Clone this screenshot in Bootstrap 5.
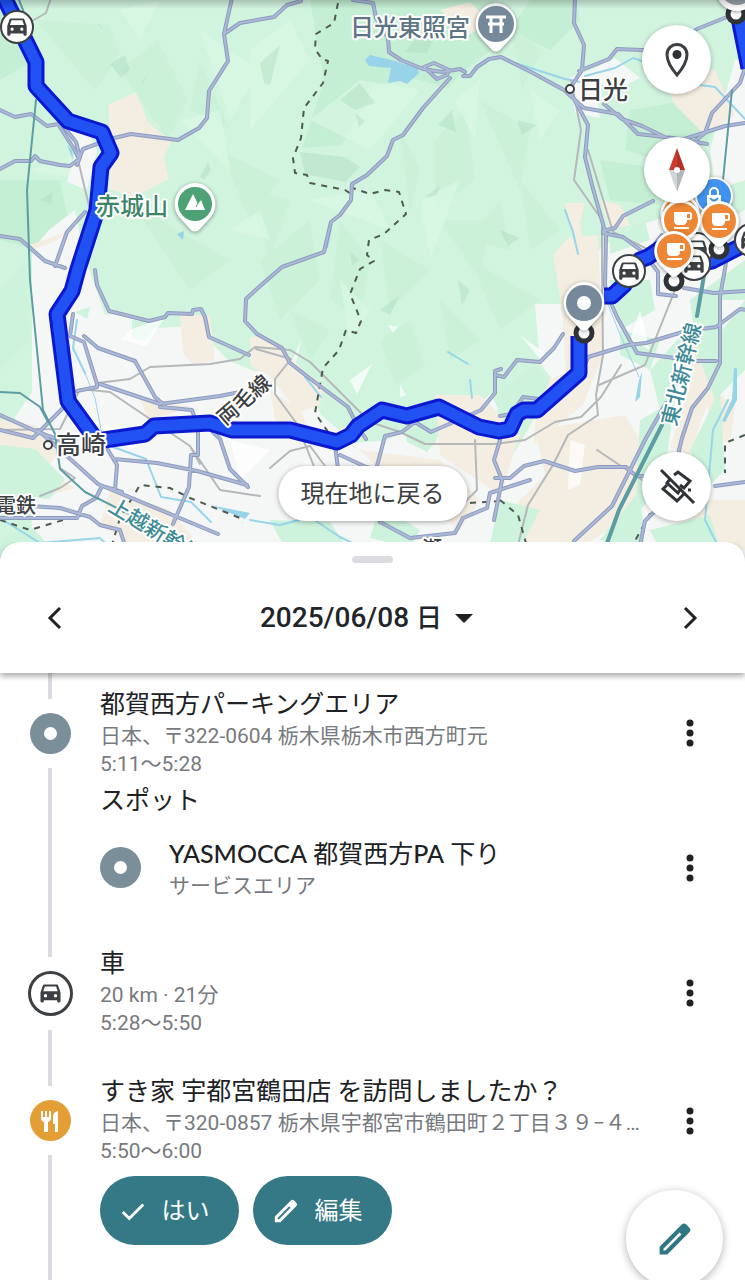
<!DOCTYPE html>
<html lang="ja">
<head>
<meta charset="utf-8">
<meta name="viewport" content="width=device-width, initial-scale=1">
<title>タイムライン</title>
<link href="https://cdn.jsdelivr.net/npm/bootstrap@5.3.0/dist/css/bootstrap.min.css" rel="stylesheet">
<style>
  body { font-family: Roboto, "Noto Sans CJK JP", sans-serif; color: #202124; background: #fff; }
  button { color: inherit; }

  /* map */
  .map-svg { font-family: "Noto Sans CJK JP", sans-serif; }
  .map-svg text { paint-order: stroke; stroke: #fff; stroke-width: 4px; stroke-linejoin: round; font-weight: 500; }
  .line-set { fill: none; stroke-linejoin: round; stroke-linecap: round; }
  .road-edge { stroke: #8e9bc0; stroke-width: 4; }
  .road-core { stroke: #abb8d6; stroke-width: 2; }
  .rail-line { stroke: #b5b8b9; stroke-width: 2; }
  .border-line { stroke: #4e5b52; stroke-width: 2; stroke-dasharray: 6 6; stroke-linecap: butt; }
  .shinkansen { stroke: #5b9da2; stroke-width: 2; }
  .river { stroke: #97d5ea; stroke-width: 2; }
  .route-edge { stroke: #0a19cf; stroke-width: 17; stroke-linejoin: round; stroke-linecap: butt; }
  .route-core { stroke: #2150f3; stroke-width: 11; stroke-linejoin: round; stroke-linecap: butt; }
  .pin-shadow { filter: drop-shadow(0 1px 2px rgba(0,0,0,.4)); }

  .map-tools { top: 25px; right: 34px; width: 69px; }
  .map-tools .low-tool { margin-top: 249px; }
  .disc-btn { width: 69px; height: 69px; background: #fff; box-shadow: 0 1px 5px rgba(0,0,0,.3); }
  .compass-btn { width: 66px; height: 66px; margin-top: 43px; }
  .here-pill { bottom: 37px; height: 55px; width: 189px; background: #fff; font-size: 24px; line-height: 32px; color: #3c4043; box-shadow: 0 1px 5px rgba(0,0,0,.35); }

  /* bottom sheet */
  .sheet { margin-top: -16px; }
  .sheet-head { height: 131px; background: #fff; border-radius: 20px 20px 0 0; box-shadow: 0 3px 6px rgba(0,0,0,.35); clip-path: inset(0 0 -24px 0); }
  .grip { width: 41px; height: 7px; margin-top: 14px; background: #dadce0; }
  .day-row { height: 69px; margin-top: 20px; padding: 0 21px; }
  .step-btn { width: 68px; height: 68px; }
  .day-btn { font-size: 28px; line-height: 36px; font-weight: 500; gap: 13px; margin-right: 12px; }
  .day-btn .kanji { font-size: 26px; }

  .rail { width: 100px; flex: none; }
  .seg { width: 4px; background: #dadce0; }
  .seg-a { height: 26px; } .seg-b { height: 29px; } .seg-c { height: 30px; }
  .mark-wrap { margin: 14px 0; }
  .dot { width: 41px; height: 41px; flex: none; }
  .dot-gray { background: #7b8f9b; }
  .dot-gray::after { content: ""; width: 13px; height: 13px; border-radius: 50%; background: #fff; }
  .dot-food { background: #e39f36; }
  .dot-car { width: 45px; height: 45px; border: 3px solid #3c4043; color: #3c4043; }
  .first-body { padding: 15px 0 28px; }
  .next-body { padding: 19px 0; }
  .ttl { font-size: 25px; line-height: 34px; font-weight: 400; margin: 0; }
  .ttl .latin { font-family: Lato, "Noto Sans CJK JP", sans-serif; font-weight: 500; }
  .sub { font-size: 21px; line-height: 28px; color: #777a7e; margin: 0; }
  .spot-title { margin-top: 6px; }
  .spot-row { margin-top: 18px; }
  .spot-row .dot { margin: 11px 28px 0 0; }
  .entry { min-width: 0; }
  .more { width: 48px; height: 48px; margin-right: 31px; flex: none; }
  .more-a { margin-top: 21px; } .more-b { margin-top: 8px; } .more-c { margin-top: 22px; }
  .answers { gap: 14px; margin-top: 11px; }
  .answer { height: 69px; width: 139px; background: #357886; color: #fff; font-size: 24px; line-height: 32px; gap: 16px; }
  .answer svg { margin-left: -10px; }
  .fab { right: 22px; bottom: -7px; width: 97px; height: 97px; background: #fff; color: #307785; box-shadow: 0 2px 8px rgba(0,0,0,.3); }
</style>
</head>
<body class="d-flex flex-column min-vh-100">

<section class="position-relative" aria-label="地図">
<svg class="map-svg d-block w-100" viewBox="0 0 745 558" role="img" aria-label="移動経路の地図">
  <defs>
    <linearGradient id="topShade" x1="0" y1="0" x2="0" y2="1"><stop offset="0" stop-color="#000" stop-opacity=".2"/><stop offset="1" stop-color="#000" stop-opacity="0"/></linearGradient>
    <path id="carGlyph" fill-rule="evenodd" d="M18.9 6C18.7 5.400 18.200 5 17.500 5h-11c-.7 0-1.200.4-1.400 1L3 12v8c0 .6.4 1 1 1h1c.6 0 1-.4 1-1v-1h12v1c0 .6.4 1 1 1h1c.6 0 1-.4 1-1v-8zM7.500 16.500a1.500 1.500 0 1 1 0-3 1.500 1.500 0 0 1 0 3zm9 0a1.500 1.500 0 1 1 0-3 1.500 1.500 0 0 1 0 3zM5.500 11l1.500-4.200h10l1.500 4.200z"/>
    <g id="carBadge"><circle r="16" fill="#fff" stroke="#3c4043" stroke-width="2"/><use href="#carGlyph" fill="#3c4043" transform="translate(-13 -14) scale(1.080)"/></g>
    <g id="cupPin"><path class="pin-shadow" fill="#fff" d="M0-20a20 20 0 0 1 13 35L4 24q-4 4-8 0l-9-9A20 20 0 0 1 0-20z"/><circle r="17" fill="#ed8736"/><path transform="translate(-11 -13)" fill="#fff" fill-rule="evenodd" d="M20 5H4v9c0 2.200 1.800 4 4 4h5c2.200 0 4-1.800 4-4v-1h3c1.100 0 2-.9 2-2V7c0-1.100-.9-2-2-2zm0 6h-3V7h3zM4 22h15v-2H4z"/></g>
    <g id="roundPin"><path class="pin-shadow" fill="#fff" d="M0-21a21 21 0 0 1 15 35L4 26q-4 3-8 0l-11-12A21 21 0 0 1 0-21z"/></g>
    <circle id="stopRing" r="8" fill="#fff" stroke="#303335" stroke-width="5"/>
    <g id="roads">
      <path d="M232-2l-8 36 4 27-19 30-2 27-8 10-21 12-47-6-17 4M111 139l-28 10-4 10M224 34l16-11 34-6 13-12 14-4M353 0l20 3 3 15 12 20 1 14 12 8 22 9 19 3 18-3 5 3M424 67l10-4 15 7-2 5-10 4-13-12M463 76l7 0 7-9 12-8 12-2 30 15 33 18 20 18 34 6 20 20 35 4 34 6M450 78l-27 30-20 27-10 5-6 16-20 19-15 9-1 16-11 15-9 7-7 30-42 15-23 20-13 12-1 22 12 13 25 14 8 15 18 14 40 30 10 20 8 12M575-2l-1 25 10 22-2 25-13 20 11 20 8 15-3 32 7 28 14 50-1 50 2 12M579 71l30-12 8-10 50 2 30-22 30-12M604 104l18 15 20 7 33 16 50-16 20-3M695 141l10-8 7-20 28-30 5-15M653 201l-30 15-8 12-12 3M603 233l20 4 20 15 15 20 0 22 18 2M662 235l-12 15"/>
      <path d="M0 110l15 7 16-3 16 12 11-2 16 25 5 10-9 7-10-1-20-4-5-5-4 5-16 0-15 8M64 127l12 15 4 15-3 8M0 236l20 3 25 22 20 7M85 212l-18 20-12 34M95 270l2 15 12 26 40 10 16-4 3-4 24 1 1-4 8-1 4 8 4 20 40 18M73 314l-3 22 14 6 13 42 0 3-20 4M84 336l14 12 37 13 20 36 10 9M100 384l60 20 60-8 20-4M160 407l32 3 6 17v28l-7 0-2 32-16 37M0 415l40 18 28 10M0 430l33 8 30-30M38 430l60 54 120 50M108 450l9 15-2 25M114 459l43 4 40 8 50 14M210 429l10 10 10 30 18 18M0 518l77 0 5-12 14-8 6-12 20 6M30 506l30 2 30 9 10 8 20 5 8 25M335 445l3 24-12 8M340 455l26 12 30 6M377 466l8-30 17-4 13-10 16 10 50-22 14-17v-22l6-2M380 522l30 16 45-5 8-15 24-10 3-15 40-13M588 358l-12 25-37 16-16-2-11 17-12 2M563 334l-9 14-14 14-23-2-13 17-9-2"/>
      <path d="M588 357l40-12 18-2 40-12 30-4 24-18 20 3 24 22M611 303l6 14 20 36 60 8 19 0M684 288l30 5 31-2M745 235l-18 22-7 40v66l-12 25-16 20-10 30-6 25-2 25M495 478l15 0 14-12 20-5 31 10 23-4 28 0 10 9 15 0M715 486l30-4M574 541l38-35 20-40 14-28 20-35M640 545l5-24 10-10 25-20M500 440l-6 20 8 20-8 40"/>
    </g>
    <path id="mainRoute" d="M-2-15L36 62v24l32 35 34 11 9 21-10 14-4 43-19 59-6 22-15 23 11 87 29 40 48-7 9-8 56-3 22 7h58l47 12 14-7 7-9 24-16 25 6 32-9 40 20 20 4 11-2 7-15 7-4h13l42-37v-37"/>
    <path id="eastRoute" d="M604 296h8l12-11 16-25 8-3 22-15M690 266l22-5 33-17M739 18l10 50"/>
  </defs>

  <!-- terrain -->
  <rect width="745" height="558" fill="#d1f4df"/>
  <path fill="#c0edcf" opacity=".7" d="M310 0h185l-4 50-30 24-13 14-33-9-40 6 -33 60-40 3 12-37 10-30-5-30zM0 0h20l15 60-35 20zM0 180h60l10 50-30 20-40-10zM530 0h45l5 20-30 30-40-20zM630 110l60-10 25 30-30 40-60-20zM600 160l70 10-10 35-50-5z"/>
  <path fill="#c4efd3" opacity=".45" d="M35 20l60 70 25-35-10-30zM120 70l38-30 30 60-20 40zM200 60l30 70-40-20zM130 200l30 20 70 40-40 30zM220 150l60 30-30 40zM250 190l40 10-20 60zM260 260l50-40 10 60-40 40zM340 220l30 40-10 60-30-20zM380 240l50 30-40 40zM400 130l20 40-10 40zM435 140l30-30 10 70-40 30zM480 100l50 30-10 60zM440 220l50 0-10 60zM470 260l70 40-40 30zM520 180l40 50-30 20zM380 340l30-20 15 45-30 20zM440 300l40 40-30 20zM290 310l40 20-20 30zM512 30l30 20-20 40zM500 200l10 50-40-10z"/>
  <path fill="#dcf8e6" opacity=".6" d="M200 30l60 40-30 50zM250 50l40-30 20 40-60 70zM310 120l50-40 60 10-50 60zM180 120l40-10 10 60zM310 200l60-10 20 40zM420 200l40-20-30 80zM455 100l25-20-5 60zM120 10l40-10-20 40zM30 170l60-20-5 30zM340 280l30 30-20 30zM530 90l30 20-20 30zM230 230l30-20 10 30z"/>
  <path fill="#a9d9bb" opacity=".4" d="M110 64l15-9 5 15-9 8zM141 83l7-10-5 10zM260 63l20-18-10 40-6-2zM340 100l20-17 15 20-20 7zM405 52l10-12 20-5-8 18zM438 125l14-15 4 22zM200 177l8-15 3 8-7 10zM425 198l15-13-3 10zM355 113l10 8-6 6zM517 120l20 5-15 10zM500 230l20 8-12 8zM40 200l13-8-2 12zM458 280l12 10-8 15zM350 252l10 8-8 5zM380 310l20-15-10 20zM300 152l45 5 15 10-15 15-40-8z" />

  <!-- towns and farmland -->
  <path fill="#f5f7f6" d="M32 250l17-20 26-20 8 42 10 28 12 35 20-2 30 15 40-2 34 35 25 10 35-3 12-28-7 32 15 13 12 30 18 15 30-15-25 28 40-2 24-10 27 8 25-15 30-30 8 14-8 34 25 10 40-70-15-18-5-60 30 0 6-25 15-20 42-30 30-10 60 7 50-30 12 4v430H0v-78l30-10 5-60-10-25-10-40 17-25zM67 120l20 10 10 20-10 40-20-8 8-30zM570 78l25-10 20-10 25 20-20 10-25-5 5 35-25-5zM735 60h10v120l-30 10-5-40z"/>
  <path fill="#f4ede1" d="M108 105l28-13 12 30 23 20-7 15 5 22-35 18-25-8 2-38zM30 245l50-18-25 14-20 8zM180 315l30 0 5 45-22 5-10-12zM250 337l15-1 20 14 17 20 22 15-4 20-22 8-28-37-20-10zM0 420l35 5 30 20-20 25 30 18-35 10-40-8zM110 490l60 20 50 60-60-5-60-40zM140 400l50 6-40 15zM270 390l30 20 20 40-45-30zM360 450l80 10 40 40-20 30-60-40zM435 395l45 0 40 40-20 60-60-40zM553 255l15-17 30-3 5 120-20 50-50 40 8-65 25-5-4-65zM535 430l90-15 30 50-20 50-60 35-50-5-10-40 30-30zM705 385l30 20-5 40-20-15zM655 60l60 10 20 45-30 20-30-30zM565 203l20 0-5 20 5 30-12-20zM600 200l20 5 10 20-20 5zM695 335l20 0-5 60-20 60-20-8 20-60zM440 10l30-8 18 18-20 16zM690 500h55v50h-60z"/>
  <path fill="#cdf3dc" d="M0 290l25-30 5 80-30 30zM0 445l35 4 30 30-15 20-50-5zM0 540l30-15 30 33H0zM132 320l25 3-10 18-15-3zM75 312l15-5-3 12zM405 430l30-5 2 15-10 12-20-10zM500 390l35-25 15 15-10 20-35 30zM620 330l40 10-10 30-30-15zM610 280l40 0 5 30-35 20zM650 370l45-50-5 50-30 40zM640 420l35-20-10 70-30 50zM690 300l30-15 3 50-25 30zM690 450l30-60 5 80-20 20zM500 500l40 10-20 38-30-5zM700 360l45-60v70l-30 30zM600 540l40-50 5 60zM270 520l60 2 20 30-60 6zM380 505l40 25-10 18-40-10zM650 530l60-15 10 35h-60zM690 300l55-40v40zM610 240l35-20 5 20-40 14z"/>
  <path fill="#fff" opacity=".7" d="M130 330l36-14-20 30-25-6zM230 440l40 10-30 30zM305 460l40 20-50 5zM570 440l15 5-5 40-12 5zM640 310l10 40-20-10zM650 480l10 20-20 40zM90 420l60 20-20 10zM388 325l10 2-5 6zM350 380l22-16-15 30zM400 385l6 10-6 2zM520 335l30 22-10 2z"/>
  <path fill="#97d3e9" d="M370 55l25 6 22 7 2 5-12 11-7-3-12 2 3-15-22-2-4-6zM332 228l-4 20-5 0 5-20zM97 22l7 8-5-5zM177 234l7-3-1 9zM67 145l5 5 1 10zM734 368h3v32l-12 22-3-1 10-22zM639 380l3-8-2 25-5 5zM210 505l40 8-5 6z"/>
  <g class="line-set river"><path d="M515 63l50 16 20 4M585 76l30-8 18-10 12 4M700 85l15 2 30 32M565 210l8 22 5 22M448 352l20 12M470 380l2 18M77 320l-4 28 12 25M113 447l33 12 15 38 30 5 20 20M305 377l16 20M0 518l40 25 60-5 20 20M250 520l30 5 30-8 30 20 20 10M728 400l-15 30-8 90 15 30"/><path stroke-width="1" d="M85 373l10 25 8 42M607 302l12 30 20 45"/></g>

  <!-- local railways -->
  <g class="line-set rail-line"><path d="M51-2l-5 15-14 8M78 160l12 50-10 30-4 35M97 383l33-4 20-12 60-3 30-5 15-12 35 3 20 12 60 60 30 10 25 12 70 0 30-4 30-18 26-5 20-20 20-32M571 80l10 50-7 50 28 40 0 50 1 85-7 40 2 20-30 20-15 30-25 40-10 40M588 150l25 82 40 20M675 290l-30 75-46 20M597 450l45 30M0 430l60-1 20-40 30 3 80 54 10 18M60 468l15 10-15 10-20 8M190 446l30 44 40 6M256 349l35 10-16 20 0 15 22 30 20 50M270 468l20-17 20-5 15 20M475 440l2 50-20 20"/></g>
  <g class="line-set border-line"><path d="M338 3l-4 20-18 11-1 15 7 10 6 2-5 22-19 25-3 30-8 20 2 15 12 2 3 8 35 7 8 5M350 187l20 7 15-4 14 2 7 22-22 20-15 6-2 15 7 6-14 8-10 25 5 12 6 15-5 12-10-3-7 20-16 18-8 45 24 35M108 558l12-40 20-33 30 3 20 10 50 20 2 5M0 520l30 10 50-15M470 503l30-2M500 500l18 15 10 35M745 435l-20 8 0 30M630 550l22-40"/></g>
  <use href="#roads" class="line-set road-edge"/><use href="#roads" class="line-set road-core"/>
  <g class="line-set shinkansen"><path d="M19 0l10 25M36 100l-9 90 3 90 13 130 12 24 5 35 25 23 48 24M0 392l20 1 20 14 8 15M732 90l-9 90"/><path stroke-width="4" d="M705 270l-8 46M662 425l-43 85-18 50"/></g>

  <use href="#mainRoute" class="line-set route-edge"/><use href="#mainRoute" class="line-set route-core"/>
  <use href="#eastRoute" class="line-set route-edge"/><use href="#eastRoute" class="line-set route-core"/>

  <!-- labels -->
  <g font-size="24">
    <text x="350" y="36" fill="#5d7584">日光東照宮</text>
    <text x="96" y="215" fill="#3d8468">赤城山</text>
    <text x="578" y="99" font-size="25" fill="#3c4043">日光</text>
    <text x="56" y="454" font-size="25" fill="#3c4043">高崎</text>
    <text x="-4" y="513" font-size="20" fill="#3c4043">電鉄</text>
    <text transform="translate(225 426) rotate(-41)" font-size="21" fill="#3c4043">両毛線</text>
    <text transform="translate(107 510) rotate(31)" font-size="21" fill="#3e8b96">上越新幹線</text>
    <text transform="translate(676 427) rotate(-76)" font-size="21" fill="#3e8b96">東北新幹線</text>
    <text x="422" y="556" font-size="20" fill="#3c4043">瀬</text>
  </g>
  <g fill="#fff" stroke="#3c4043" stroke-width="2"><circle cx="570" cy="89" r="4"/><circle cx="48" cy="445" r="4"/></g>

  <!-- pins -->
  <g transform="translate(496 24)"><use href="#roundPin"/><circle r="18" fill="#75899a"/><path fill="none" stroke="#fff" stroke-width="3" d="M-10-7H10M-8 0H8M-5-7V9M5-7V9"/></g>
  <g transform="translate(195 204)"><use href="#roundPin"/><circle r="17" fill="#4da174"/><path fill="#fff" d="M-10 6L-2-10 3 0 6-4 10 6z"/><path stroke="#4da174" d="M1 3l3-6"/></g>
  <use href="#carBadge" x="17" y="27"/>
  <use href="#stopRing" x="584" y="333"/>
  <g transform="translate(584 303)"><use href="#roundPin"/><circle r="18" fill="#75899a"/><circle r="7" fill="#fff"/></g>
  <use href="#carBadge" x="629" y="271"/>
  <use href="#carBadge" x="697" y="249"/>
  <use href="#carBadge" x="694" y="264"/>
  <use href="#carBadge" x="751" y="240"/>
  <use href="#stopRing" x="674" y="281"/><use href="#stopRing" x="719" y="249"/><use href="#stopRing" x="736" y="14"/>
  <circle class="pin-shadow" cx="737" cy="-10" r="21" fill="#fff"/><circle cx="737" cy="-12" r="17" fill="#98a1aa"/>
  <g transform="translate(714 196)"><circle class="pin-shadow" r="19" fill="#fff"/><circle r="17" fill="#4292ef"/><path fill="#fff" d="M-7-1H7V11H-7z"/><path fill="none" stroke="#fff" stroke-width="2" d="M-4-1V-4a4 4 0 0 1 8 0v3"/><path fill="none" stroke="#4292ef" stroke-width="2" d="M-4 2q4 5 8 0"/></g>
  <use href="#cupPin" x="680" y="214"/><use href="#cupPin" x="719" y="221"/><use href="#cupPin" x="681" y="220"/><use href="#cupPin" x="674" y="251"/>
  <rect width="745" height="9" fill="url(#topShade)"/>
</svg>

<div class="map-tools position-absolute d-flex flex-column align-items-center">
  <button class="disc-btn btn border-0 rounded-circle p-0" aria-label="場所を表示">
    <svg width="36" height="38" viewBox="0 0 36 38" fill="none"><path d="M18 34C12 27 8 20 8 13.500a10 10 0 0 1 20 0C28 20 24 27 18 34z" stroke="#3c4043" stroke-width="3"/><circle cx="18" cy="13.500" r="4.500" fill="#303335"/></svg>
  </button>
  <button class="disc-btn compass-btn btn border-0 rounded-circle p-0" aria-label="コンパス">
    <svg width="20" height="44" viewBox="0 0 20 44"><path fill="#cb3a2d" d="M10 0L2 22h8z"/><path fill="#b53024" d="M10 0l8 22h-8z"/><path fill="#d0d3d7" d="M10 44L2 22h8z"/><path fill="#b3b7bd" d="M10 44l8-22h-8z"/><circle cx="10" cy="22" r="3" fill="#fff"/></svg>
  </button>
  <button class="disc-btn low-tool btn border-0 rounded-circle p-0" aria-label="経路を非表示">
    <svg width="44" height="44" viewBox="0 0 44 44" fill="none" stroke="#303335" stroke-width="3"><path d="M6 5l33 33"/><path d="M19 10l4-3 12 9-6 7-4-3"/><path d="M15 14l-3 4 11 10 3-5"/><path d="M12 20l-4 4 14 12 8-8"/><path d="M33 25h3" /></svg>
  </button>
</div>
<button class="here-pill btn border-0 rounded-pill position-absolute start-50 translate-middle-x p-0">現在地に戻る</button>
</section>

<main class="sheet position-relative d-flex flex-column flex-grow-1">
  <header class="sheet-head position-relative d-flex flex-column align-items-center">
    <div class="grip rounded-pill"></div>
    <div class="day-row w-100 d-flex align-items-center justify-content-between">
      <button class="step-btn btn border-0 p-0" aria-label="前の日"><svg width="20" height="28" viewBox="0 0 20 28" fill="none" stroke="#202124" stroke-width="3"><path d="M15 4L5 14l10 10"/></svg></button>
      <button class="day-btn btn border-0 p-0 d-flex align-items-center"><span>2025/06/08 <span class="kanji">日</span></span><svg width="18" height="10" viewBox="0 0 18 10"><path d="M0 1h18L9 10z" fill="#202124"/></svg></button>
      <button class="step-btn btn border-0 p-0" aria-label="次の日"><svg width="20" height="28" viewBox="0 0 20 28" fill="none" stroke="#202124" stroke-width="3"><path d="M5 4l10 10L5 24"/></svg></button>
    </div>
  </header>

  <article class="d-flex">
    <div class="rail d-flex flex-column align-items-center">
      <div class="seg seg-a"></div>
      <div class="mark-wrap"><div class="dot dot-gray rounded-circle d-flex align-items-center justify-content-center"></div></div>
      <div class="seg flex-grow-1"></div>
    </div>
    <div class="first-body flex-grow-1 entry">
      <div class="d-flex">
        <div class="entry flex-grow-1">
          <h2 class="ttl text-truncate">都賀西方パーキングエリア</h2>
          <p class="sub text-truncate">日本、〒322-0604 栃木県栃木市西方町元</p>
          <p class="sub">5:11～5:28</p>
        </div>
        <button class="more more-a btn border-0 p-0" aria-label="その他"><svg width="8" height="28" viewBox="0 0 8 28" fill="#202124"><circle cx="4" cy="4" r="3.500"/><circle cx="4" cy="14" r="3.500"/><circle cx="4" cy="24" r="3.500"/></svg></button>
      </div>
      <h3 class="ttl spot-title">スポット</h3>
      <div class="spot-row d-flex">
        <div class="dot dot-gray rounded-circle d-flex align-items-center justify-content-center"></div>
        <div class="entry flex-grow-1">
          <h4 class="ttl text-truncate"><span class="latin">YASMOCCA</span> 都賀西方<span class="latin">PA</span> 下り</h4>
          <p class="sub">サービスエリア</p>
        </div>
        <button class="more more-b btn border-0 p-0" aria-label="その他"><svg width="8" height="28" viewBox="0 0 8 28" fill="#202124"><circle cx="4" cy="4" r="3.500"/><circle cx="4" cy="14" r="3.500"/><circle cx="4" cy="24" r="3.500"/></svg></button>
      </div>
    </div>
  </article>

  <article class="d-flex">
    <div class="rail d-flex flex-column align-items-center">
      <div class="seg seg-b"></div>
      <div class="mark-wrap"><div class="dot dot-car rounded-circle d-flex align-items-center justify-content-center"><svg width="29" height="29" viewBox="0 0 24 26" fill="currentColor"><use href="#carGlyph"/></svg></div></div>
      <div class="seg flex-grow-1"></div>
    </div>
    <div class="next-body flex-grow-1 entry d-flex">
      <div class="entry flex-grow-1">
        <h2 class="ttl">車</h2>
        <p class="sub">20 km · 21分</p>
        <p class="sub">5:28～5:50</p>
      </div>
      <button class="more more-c btn border-0 p-0" aria-label="その他"><svg width="8" height="28" viewBox="0 0 8 28" fill="#202124"><circle cx="4" cy="4" r="3.500"/><circle cx="4" cy="14" r="3.500"/><circle cx="4" cy="24" r="3.500"/></svg></button>
    </div>
  </article>

  <article class="d-flex flex-grow-1">
    <div class="rail d-flex flex-column align-items-center">
      <div class="seg seg-c"></div>
      <div class="mark-wrap"><div class="dot dot-food rounded-circle d-flex align-items-center justify-content-center"><svg width="24" height="24" viewBox="0 0 24 24" fill="#fff"><path d="M3 2h2v6h2V2h2v6h2V2h2v7q0 3-3 4v10H6V13Q3 12 3 9zM20 2v21h-3v-8h-2V8q0-5 5-6z"/></svg></div></div>
      <div class="seg flex-grow-1"></div>
    </div>
    <div class="next-body flex-grow-1 entry">
      <div class="d-flex">
        <div class="entry flex-grow-1">
          <h2 class="ttl text-truncate">すき家 宇都宮鶴田店 を訪問しましたか？</h2>
          <p class="sub text-truncate">日本、〒320-0857 栃木県宇都宮市鶴田町２丁目３９−４…</p>
          <p class="sub">5:50～6:00</p>
        </div>
        <button class="more more-c btn border-0 p-0" aria-label="その他"><svg width="8" height="28" viewBox="0 0 8 28" fill="#202124"><circle cx="4" cy="4" r="3.500"/><circle cx="4" cy="14" r="3.500"/><circle cx="4" cy="24" r="3.500"/></svg></button>
      </div>
      <div class="answers d-flex">
        <button class="answer btn border-0 rounded-pill p-0 d-flex align-items-center justify-content-center"><svg width="26" height="26" viewBox="0 0 28 28" fill="none" stroke="#fff" stroke-width="3"><path d="M3 15l7 7L25 7"/></svg>はい</button>
        <button class="answer btn border-0 rounded-pill p-0 d-flex align-items-center justify-content-center"><svg width="26" height="26" viewBox="0 0 28 28"><path fill="#fff" fill-rule="evenodd" d="M2 20v6h6L25 9q2-2 0-4l-2-2q-2-2-4 0zM5 21.500L17.500 9l1.500 1.500L6.500 23H5z"/></svg>編集</button>
      </div>
    </div>
  </article>
</main>

<button class="fab btn border-0 rounded-circle p-0 position-fixed" aria-label="編集"><svg width="36" height="36" viewBox="0 0 28 28"><path fill="currentColor" fill-rule="evenodd" d="M2 20v6h6L25 9q2-2 0-4l-2-2q-2-2-4 0zM5 21.500L17.500 9l1.500 1.500L6.500 23H5z"/></svg></button>

<script src="https://cdn.jsdelivr.net/npm/bootstrap@5.3.0/dist/js/bootstrap.bundle.min.js"></script>
</body>
</html>
